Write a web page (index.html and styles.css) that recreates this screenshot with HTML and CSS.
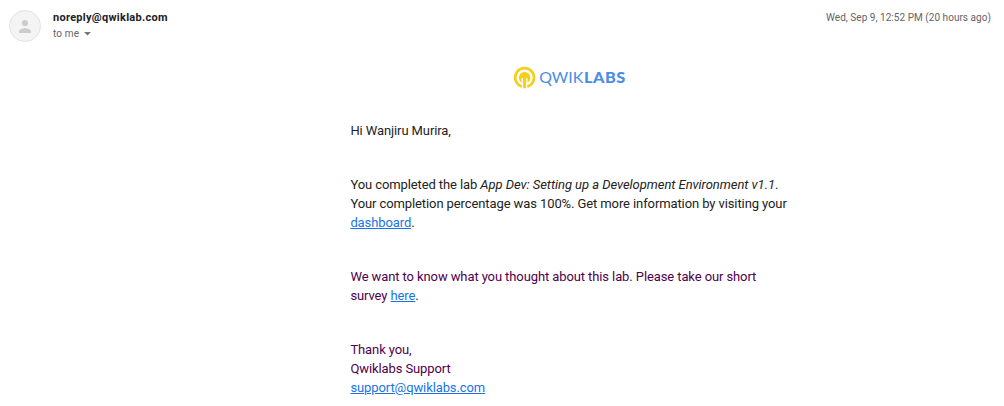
FILE: index.html
```html
<!DOCTYPE html>
<html lang="en">
<head>
<meta charset="utf-8">
<title>Qwiklabs message</title>
<link rel="stylesheet" href="styles.css">
</head>
<body>
<header class="head">
  <svg class="avatar" viewBox="0 0 32 32"><circle cx="16" cy="16" r="15.5" fill="#f4f4f4" stroke="#e2e2e2"/><circle cx="16" cy="13" r="3.1" fill="#ccc"/><path d="M10 23v-1.700c0-2 4-3.100 6-3.100s6 1.100 6 3.100V23z" fill="#ccc"/></svg>
  <div class="who">
    <div class="sender">noreply@qwiklab.com</div>
    <div class="to"><span>to me</span><svg width="7" height="4" viewBox="0 0 7 4"><path d="M0 0h7L3.500 3.500z" fill="#777"/></svg></div>
  </div>
  <time class="date">Wed, Sep 9, 12:52 PM (20 hours ago)</time>
</header>
<main class="mail">
  <svg class="logo" width="114" height="24" viewBox="0 0 114 24">
    <path d="M8.900 20.600A9.400 9.400 0 1 1 14.300 20.600" fill="none" stroke="#f4cf1c" stroke-width="2.800"/>
    <path d="M8.700 16.700A5.800 5.800 0 1 1 14.500 16.700z" fill="#f4cf1c"/>
    <path d="M9.300 12v6M13.900 12v6" stroke="#fff" stroke-width="1.300"/>
    <path d="M11.600 11v11.300" stroke="#f4cf1c" stroke-width="3"/>
    <text class="word" x="26.300" y="17" textLength="44" lengthAdjust="spacingAndGlyphs">QWIK</text>
    <text class="word strong" x="71" y="17" textLength="41.800" lengthAdjust="spacingAndGlyphs">LABS</text>
  </svg>
  <p>Hi Wanjiru Murira,</p>
  <p>You completed the lab <em>App Dev: Setting up a Development Environment v1.1</em>.<br>Your completion percentage was 100%. Get more information by visiting your<br><a href="#">dashboard</a>.</p>
  <p class="quoted">We want to know what you thought about this lab. Please take our short<br>survey <a href="#">here</a>.</p>
  <p class="quoted">Thank you,<br>Qwiklabs Support<br><a href="#">support@qwiklabs.com</a></p>
</main>
</body>
</html>
```

FILE: styles.css
```css
body {
  margin: 0;
  background: #fff;
  color: #222;
  font-family: Roboto, "Liberation Sans", sans-serif;
}
.head {
  display: flex;
  align-items: flex-start;
  height: 56px;
  padding: 10px 13px 0 9px;
  box-sizing: border-box;
}
.avatar { width: 32px; height: 32px; }
.who { margin-left: 12px; flex: 1; }
.sender {
  font-size: 11px;
  font-weight: 700;
  line-height: 16px;
  letter-spacing: 0.28px;
  color: #202124;
}
.to {
  display: flex;
  align-items: center;
  gap: 5px;
  font-size: 10px;
  line-height: 15px;
  letter-spacing: 0.15px;
  color: #5f6368;
}
.date {
  font-size: 10px;
  line-height: 16px;
  letter-spacing: 0.04px;
  color: #5f6368;
  white-space: nowrap;
}
.mail {
  width: 440px;
  margin-left: 350.4px;
  padding-top: 10px;
  font-size: 13px;
  line-height: 19px;
  letter-spacing: -0.1px;
  white-space: nowrap;
}
.mail em { letter-spacing: -0.05px; }
.logo { display: block; margin: 0 auto 31px; }
.word { font: 400 16px Lato, sans-serif; letter-spacing: 0; fill: #4a8ce8; }
.strong { font-size: 15.5px; font-weight: 900; letter-spacing: 0.5px; }
p { margin: 0 0 35px; }
p:last-child { margin-bottom: 0; }
.quoted { color: #500050; }
a { color: #1a73e8; text-decoration: underline; }
```
